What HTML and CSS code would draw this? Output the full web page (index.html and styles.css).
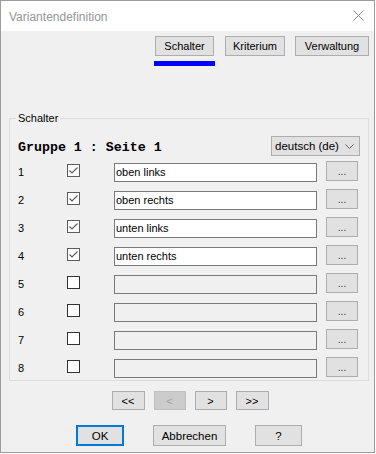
FILE: index.html
```html
<!DOCTYPE html>
<html lang="de">
  <head>
    <meta charset="UTF-8" />
    <meta name="viewport" content="width=device-width, initial-scale=1.0" />
    <title>Variantendefinition</title>
    <link rel="stylesheet" href="styles.css">
  </head>
  <body>
    <div class="window">
      <!-- Titelleiste -->
      <div class="titlebar">
        <span class="title">Variantendefinition</span>
        <svg class="close" width="11" height="11" viewBox="0 0 11 11">
          <path d="M0.5 0.5 L10.5 10.5 M10.5 0.5 L0.5 10.5" stroke="#8a8a8a" stroke-width="1" fill="none" />
        </svg>
      </div>

      <div class="content">
        <!-- Reiter -->
        <div class="tabs">
          <div class="tab">
            <button class="btn tab-btn w-schalter">Schalter</button>
            <div class="tab-line"></div>
          </div>
          <div class="tab">
            <button class="btn tab-btn w-kriterium">Kriterium</button>
          </div>
          <div class="tab">
            <button class="btn tab-btn w-verwaltung">Verwaltung</button>
          </div>
        </div>

        <!-- Gruppe Schalter -->
        <div class="group">
          <span class="group-label">Schalter</span>
          <div class="group-head">
            <span class="group-title">Gruppe 1 : Seite 1</span>
            <div class="select">
              <span>deutsch (de)</span>
              <svg width="9" height="5" viewBox="0 0 9 5">
                <path d="M0.5 0.5 L4.5 4.5 L8.5 0.5" stroke="#606060" fill="none" />
              </svg>
            </div>
          </div>

          <div class="rows">
            <div class="row">
              <span class="num">1</span>
              <svg class="check" width="13" height="13" viewBox="0 0 13 13">
                <rect x="0.5" y="0.5" width="12" height="12" fill="#fff" stroke="#5c5c5c" />
                <path d="M2.5 6.5 L5 9 L10.5 3.5" stroke="#5c5c5c" stroke-width="1.2" fill="none" />
              </svg>
              <div class="field filled">oben links</div>
              <button class="btn dots">...</button>
            </div>
            <div class="row">
              <span class="num">2</span>
              <svg class="check" width="13" height="13" viewBox="0 0 13 13">
                <rect x="0.5" y="0.5" width="12" height="12" fill="#fff" stroke="#5c5c5c" />
                <path d="M2.5 6.5 L5 9 L10.5 3.5" stroke="#5c5c5c" stroke-width="1.2" fill="none" />
              </svg>
              <div class="field filled">oben rechts</div>
              <button class="btn dots">...</button>
            </div>
            <div class="row">
              <span class="num">3</span>
              <svg class="check" width="13" height="13" viewBox="0 0 13 13">
                <rect x="0.5" y="0.5" width="12" height="12" fill="#fff" stroke="#5c5c5c" />
                <path d="M2.5 6.5 L5 9 L10.5 3.5" stroke="#5c5c5c" stroke-width="1.2" fill="none" />
              </svg>
              <div class="field filled">unten links</div>
              <button class="btn dots">...</button>
            </div>
            <div class="row">
              <span class="num">4</span>
              <svg class="check" width="13" height="13" viewBox="0 0 13 13">
                <rect x="0.5" y="0.5" width="12" height="12" fill="#fff" stroke="#5c5c5c" />
                <path d="M2.5 6.5 L5 9 L10.5 3.5" stroke="#5c5c5c" stroke-width="1.2" fill="none" />
              </svg>
              <div class="field filled">unten rechts</div>
              <button class="btn dots">...</button>
            </div>
            <div class="row">
              <span class="num">5</span>
              <span class="box"></span>
              <div class="field"></div>
              <button class="btn dots">...</button>
            </div>
            <div class="row">
              <span class="num">6</span>
              <span class="box"></span>
              <div class="field"></div>
              <button class="btn dots">...</button>
            </div>
            <div class="row">
              <span class="num">7</span>
              <span class="box"></span>
              <div class="field"></div>
              <button class="btn dots">...</button>
            </div>
            <div class="row">
              <span class="num">8</span>
              <span class="box"></span>
              <div class="field"></div>
              <button class="btn dots">...</button>
            </div>
          </div>
        </div>

        <!-- Blättern -->
        <div class="nav">
          <button class="btn nav-btn wide">&lt;&lt;</button>
          <button class="btn nav-btn" disabled>&lt;</button>
          <button class="btn nav-btn">&gt;</button>
          <button class="btn nav-btn wide">&gt;&gt;</button>
        </div>

        <!-- Dialogknöpfe -->
        <div class="actions">
          <button class="btn act-btn ok">OK</button>
          <button class="btn act-btn cancel">Abbrechen</button>
          <button class="btn act-btn help">?</button>
        </div>
      </div>
    </div>
  </body>
</html>
```

FILE: styles.css
```css
* {
  box-sizing: border-box;
}

body {
  margin: 0;
  background: #ffffff;
  font-family: "Liberation Sans", Arial, sans-serif;
  font-size: 11px;
  color: #000;
}

.window {
  width: 375px;
  height: 453px;
  border: 1px solid #9c9c9c;
  background: #f0f0f0;
  display: flex;
  flex-direction: column;
}

/* Titelleiste */
.titlebar {
  height: 30px;
  background: #fff;
  display: flex;
  align-items: center;
  justify-content: space-between;
  padding: 0 10px 0 8px;
}

.title {
  font-size: 12px;
  color: #959595;
  padding-top: 1px;
}

.close {
  margin-top: -1px;
}

.content {
  display: flex;
  flex-direction: column;
}

/* Knöpfe allgemein */
.btn {
  font-family: "Liberation Sans", Arial, sans-serif;
  font-size: 11px;
  color: #000;
  background: #e1e1e1;
  border: 1px solid #adadad;
  padding: 0;
  margin: 0;
  cursor: pointer;
}

.btn:disabled {
  background: #cccccc;
  border-color: #bfbfbf;
  color: #a0a0a0;
}

/* Reiter */
.tabs {
  display: flex;
  justify-content: flex-end;
  align-items: flex-start;
  gap: 10px;
  padding: 5px 5px 0 0;
}

.tab {
  display: flex;
  flex-direction: column;
  align-items: center;
}

.tab-btn {
  height: 20px;
}

.w-schalter {
  width: 59px;
}

.w-kriterium {
  width: 60px;
}

.w-verwaltung {
  width: 74px;
}

.tab-line {
  width: 61px;
  height: 5px;
  margin-top: 5px;
  background: #0000ff;
}

/* Gruppe */
.group {
  position: relative;
  margin: 52px 5px 0 8px;
  border: 1px solid #dcdcdc;
  padding: 17px 8px 2px 8px;
}

.group-label {
  position: absolute;
  top: -8px;
  left: 6px;
  padding: 0 2px;
  background: #f0f0f0;
  line-height: 14px;
}

.group-head {
  display: flex;
  justify-content: space-between;
  align-items: center;
  height: 20px;
  margin-bottom: 5px;
}

.group-title {
  font-family: "Liberation Mono", "DejaVu Sans Mono", monospace;
  font-weight: bold;
  font-size: 13.3px;
  padding-top: 2px;
}

.select {
  width: 89px;
  height: 20px;
  background: #e1e1e1;
  border: 1px solid #adadad;
  display: flex;
  align-items: center;
  justify-content: space-between;
  padding: 0 5px 0 3px;
  font-size: 11.5px;
}

.rows {
  display: flex;
  flex-direction: column;
  gap: 7px;
}

.row {
  display: grid;
  grid-template-columns: 49px 47px 203px 41px;
  align-items: start;
  height: 21px;
}

.num {
  line-height: 21px;
  padding-top: 1px;
}

.check,
.box {
  margin-top: 3px;
}

.field {
  margin-top: 2px;
  height: 19px;
  border: 1px solid #7a7a7a;
  background: #f0f0f0;
  line-height: 17px;
  padding-left: 1px;
}

.field.filled {
  background: #fff;
}

.box {
  display: block;
  width: 13px;
  height: 13px;
  border: 1px solid #333;
  background: #fff;
}

.dots {
  width: 32px;
  height: 20px;
  justify-self: end;
  font-size: 10px;
  color: #333;
}

/* Blättern */
.nav {
  display: flex;
  justify-content: center;
  gap: 9px;
  margin-top: 10px;
  padding-left: 5px;
}

.nav-btn {
  width: 32px;
  height: 19px;
}

.nav-btn.wide {
  width: 33px;
}

/* Dialogknöpfe */
.actions {
  display: flex;
  justify-content: center;
  gap: 29px;
  margin-top: 15px;
  padding-left: 3px;
}

.act-btn {
  height: 21px;
  font-size: 11.5px;
}

.ok {
  width: 48px;
  border: 2px solid #0078d7;
}

.cancel {
  width: 73px;
}

.help {
  width: 47px;
}
```
